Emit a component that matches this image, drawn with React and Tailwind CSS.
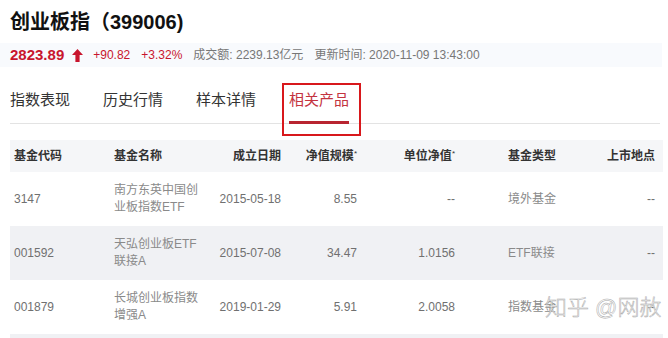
import React from 'react';

const FONT = "font-['Liberation_Sans','Noto_Sans_CJK_SC',sans-serif]";

const tabs = ['指数表现', '历史行情', '样本详情', '相关产品'];

const rows = [
    { code: '3147', name: ['南方东英中国创', '业板指数ETF'], date: '2015-05-18', size: '8.55', nav: '--', type: '境外基金', place: '--' },
    { code: '001592', name: ['天弘创业板ETF', '联接A'], date: '2015-07-08', size: '34.47', nav: '1.0156', type: 'ETF联接', place: '--' },
    { code: '001879', name: ['长城创业板指数', '增强A'], date: '2019-01-29', size: '5.91', nav: '2.0058', type: '指数基金', place: '--' },
];

// column widths: code / name / date / size / nav / type / place
const GRID = 'grid grid-cols-[100px_90px_84px_73px_98px_145px_1fr]';

const UpArrow = () => (
    <svg width="11" height="13" viewBox="0 0 11 13" className="mx-[8px]">
        <path d="M5.5 0 L11 6 L7.6 6 L7.6 13 L3.4 13 L3.4 6 L0 6 Z" fill="#c8152d" />
    </svg>
);

const App = () => {
    return (
        <div className={`relative w-[668px] h-[338px] overflow-hidden bg-white ${FONT}`}>
            {/* title */}
            <h1 className="pl-[10px] pt-[10px] text-[20px] leading-[24px] font-bold text-[#111]">
                创业板指（399006)
            </h1>

            {/* quote line */}
            <div className="mt-[9px] mr-[6px] h-[24px] bg-[#f8fafd] pl-[10px] flex items-center text-[12px] text-[#777]">
                <span className="text-[15px] font-bold text-[#c8152d]">2823.89</span>
                <UpArrow />
                <span className="text-[#c8152d] ml-[2px]">+90.82</span>
                <span className="text-[#c8152d] ml-[11px]">+3.32%</span>
                <span className="ml-[11px]">成交额: 2239.13亿元</span>
                <span className="ml-[11px]">更新时间: 2020-11-09 13:43:00</span>
            </div>

            {/* tabs */}
            <div className="mt-[23px] mx-[10px] mr-[8px] flex gap-[33px] border-b border-[#e3e3e3]">
                {tabs.map((t, i) => {
                    const active = i === 3;
                    return (
                        <div
                            key={t}
                            className={
                                'relative pb-[11px] text-[15px] leading-[20px] border-b-[3px] -mb-px ' +
                                (active ? 'text-[#c4343f] border-[#b82430]' : 'text-[#333] border-transparent')
                            }
                        >
                            {t}
                            {active && (
                                <div className="absolute -left-[7px] -top-[7px] w-[79px] h-[53px] border-2 border-[#d8181c]" />
                            )}
                        </div>
                    );
                })}
            </div>

            {/* table */}
            <div className="mt-[16px] ml-[10px] w-[653px] text-[12px]">
                <div className={`${GRID} h-[32px] items-center bg-[#f5f6f8] font-bold text-[#333]`}>
                    <div className="pl-[4px]">基金代码</div>
                    <div className="pl-[4px]">基金名称</div>
                    <div className="text-right pr-[3px]">成立日期</div>
                    <div className="text-right">净值规模<sup className="text-[8px] font-normal">*</sup></div>
                    <div className="text-right">单位净值<sup className="text-[8px] font-normal">*</sup></div>
                    <div className="pl-[53px]">基金类型</div>
                    <div className="text-right pr-[8px]">上市地点</div>
                </div>
                {rows.map((r, i) => (
                    <div
                        key={r.code}
                        className={`${GRID} h-[54px] items-center text-[#707070] ${i % 2 === 1 ? 'bg-[#f0f1f4]' : 'bg-white'}`}
                    >
                        <div className="pl-[4px]">{r.code}</div>
                        <div className="pl-[4px] leading-[17px] text-[#8a8a8a]">
                            {r.name[0]}
                            <br />
                            {r.name[1]}
                        </div>
                        <div className="text-right pr-[3px]">{r.date}</div>
                        <div className="text-right">{r.size}</div>
                        <div className="text-right">{r.nav}</div>
                        <div className="pl-[53px] text-[#8a8a8a]">{r.type}</div>
                        <div className="text-right pr-[8px]">{r.place}</div>
                    </div>
                ))}
                <div className="h-[10px] bg-[#f0f1f4]" />
            </div>

            {/* watermark */}
            <div className="absolute left-[545px] top-[297px] text-[22px] leading-[22px] font-light text-white [-webkit-text-stroke:0.5px_#a8a8a8] whitespace-nowrap">
                知乎 @网赦
            </div>
        </div>
    );
};

export default App;
